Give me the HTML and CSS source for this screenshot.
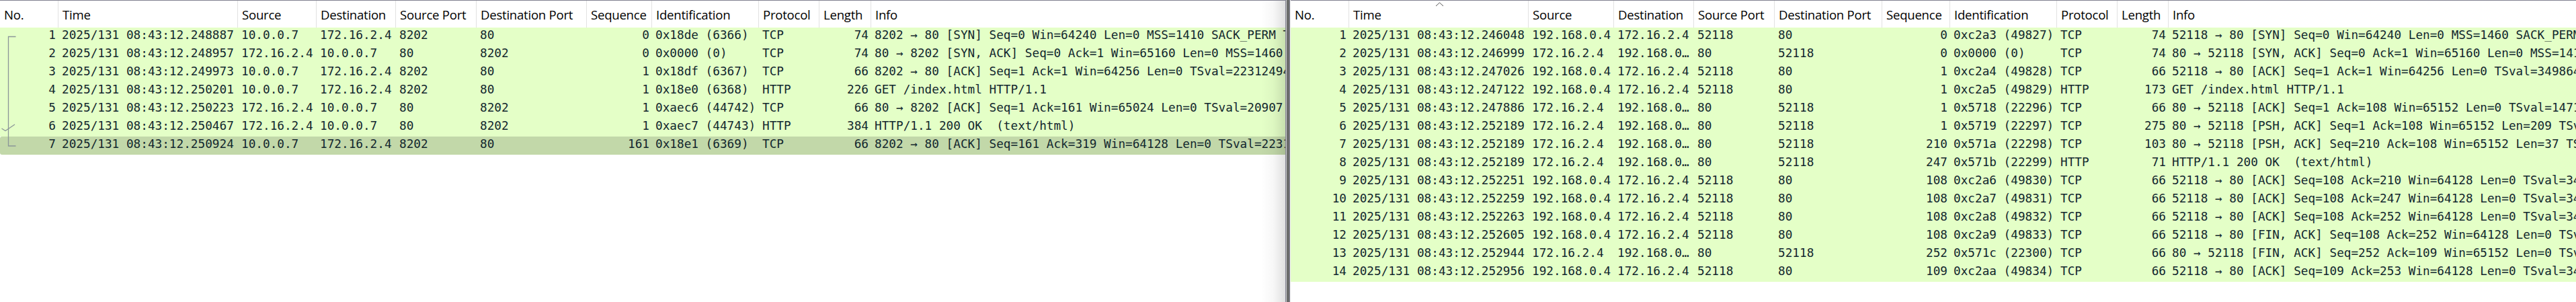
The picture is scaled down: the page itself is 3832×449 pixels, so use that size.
FILE: index.html
```
<!DOCTYPE html>
<html lang="en">
<head>
    <meta charset="UTF-8">
    <meta name="viewport" content="width=device-width, initial-scale=1.0">
    <title>Packet list</title>
    <link rel="stylesheet" href="styles.css">
</head>
<body>

<div class="screen">
    <div class="pane pane-left">
        <div class="row head">
            <span>No.</span><span>Time</span><span>Source</span><span>Destination</span><span>Source Port</span><span>Destination Port</span><span>Sequence</span><span>Identification</span><span>Protocol</span><span>Length</span><span>Info</span>
        </div>
        <div class="packets" id="left"></div>
        <svg class="related" width="28" height="190" viewBox="0 0 28 190" fill="none" stroke="#8b9698" stroke-width="1.3">
            <path d="M23.5 13.5H12.5V176H23.5"/>
            <path d="M2.5 150L8 153.5L22 144"/>
        </svg>
        <div class="shade"></div>
    </div>
    <div class="divider"></div>
    <div class="pane pane-right">
        <div class="row head">
            <span>No.</span><span class="sorted">Time<svg class="sort" width="13" height="7" viewBox="0 0 13 7" fill="none" stroke="#555"><path d="M1 6L6.5 1L12 6"/></svg></span><span>Source</span><span>Destination</span><span>Source Port</span><span>Destination Port</span><span>Sequence</span><span>Identification</span><span>Protocol</span><span>Length</span><span>Info</span>
        </div>
        <div class="packets" id="right"></div>
    </div>
</div>

<script src="script.js"></script>
</body>
</html>
```
FILE: styles.css
```
body {
    margin: 0;
    background-color: #fff;
    font-family: "DejaVu Sans Mono", monospace;
    font-size: 17.72px;
    color: #12272e;
}
.screen {
    display: flex;
    height: 449px;
    overflow: hidden;
}
.pane {
    position: relative;
    box-sizing: border-box;
    border-top: 1px solid #80808f;
    overflow: hidden;
}
.pane-left {
    width: 1912px;
    --cols: 87px 267px 117px 118px 120px 164px 97px 159px 90px 77px 1fr;
}
.pane-right {
    width: 1912px;
    --cols: 87px 267px 127px 119px 120px 160px 101px 159px 90px 76px 1fr;
}
/* window edge between the two captures */
.divider {
    width: 8px;
    background: linear-gradient(to right, #80808f 1px, #cfd0d2 1px, #cfd0d2 2px, #6b6c6b 2px, #6b6c6b 6px, #80808f 6px, #80808f 7px, #f0f0f0 7px);
}
.row {
    display: grid;
    grid-template-columns: var(--cols);
    height: 27px;
    line-height: 22px;
    background-color: #e4ffc7;
}
.row span {
    padding: 0 4px 0 5px;
    white-space: pre;
    overflow: hidden;
}
.packets span:nth-child(1),
.packets span:nth-child(7),
.packets span:nth-child(10) {
    text-align: right;
}
.packets .selected {
    background-color: #c2d8a9;
    border-radius: 3px 0 0 3px;
}
.head {
    height: 40px;
    line-height: 42px;
    background-color: #fff;
    font-family: "Open Sans", sans-serif;
    font-size: 18.6px;
    letter-spacing: -0.25px;
    color: #000;
}
.head span {
    padding: 0 0 0 6px;
    border-right: 1px solid #e2e2e2;
}
.head span:last-child {
    border-right: 0;
}
.head .sorted {
    position: relative;
}
.sort {
    position: absolute;
    left: 128px;
    top: 2px;
}
.related {
    position: absolute;
    left: 0;
    top: 40px;
}
.shade {
    position: absolute;
    top: 0;
    right: 0;
    bottom: 0;
    width: 36px;
    background: linear-gradient(to right, rgba(0, 0, 0, 0), rgba(0, 0, 0, 0.03) 50%, rgba(0, 0, 0, 0.12));
}
```
FILE: script.js
```
const left = [
    ["1", "2025/131 08:43:12.248887", "10.0.0.7", "172.16.2.4", "8202", "80", "0", "0x18de (6366)", "TCP", "74", "8202 → 80 [SYN] Seq=0 Win=64240 Len=0 MSS=1410 SACK_PERM T"],
    ["2", "2025/131 08:43:12.248957", "172.16.2.4", "10.0.0.7", "80", "8202", "0", "0x0000 (0)", "TCP", "74", "80 → 8202 [SYN, ACK] Seq=0 Ack=1 Win=65160 Len=0 MSS=1460"],
    ["3", "2025/131 08:43:12.249973", "10.0.0.7", "172.16.2.4", "8202", "80", "1", "0x18df (6367)", "TCP", "66", "8202 → 80 [ACK] Seq=1 Ack=1 Win=64256 Len=0 TSval=22312494"],
    ["4", "2025/131 08:43:12.250201", "10.0.0.7", "172.16.2.4", "8202", "80", "1", "0x18e0 (6368)", "HTTP", "226", "GET /index.html HTTP/1.1"],
    ["5", "2025/131 08:43:12.250223", "172.16.2.4", "10.0.0.7", "80", "8202", "1", "0xaec6 (44742)", "TCP", "66", "80 → 8202 [ACK] Seq=1 Ack=161 Win=65024 Len=0 TSval=20907"],
    ["6", "2025/131 08:43:12.250467", "172.16.2.4", "10.0.0.7", "80", "8202", "1", "0xaec7 (44743)", "HTTP", "384", "HTTP/1.1 200 OK  (text/html)"],
    ["7", "2025/131 08:43:12.250924", "10.0.0.7", "172.16.2.4", "8202", "80", "161", "0x18e1 (6369)", "TCP", "66", "8202 → 80 [ACK] Seq=161 Ack=319 Win=64128 Len=0 TSval=2231"]
];

const right = [
    ["1", "2025/131 08:43:12.246048", "192.168.0.4", "172.16.2.4", "52118", "80", "0", "0xc2a3 (49827)", "TCP", "74", "52118 → 80 [SYN] Seq=0 Win=64240 Len=0 MSS=1460 SACK_PERM"],
    ["2", "2025/131 08:43:12.246999", "172.16.2.4", "192.168.0…", "80", "52118", "0", "0x0000 (0)", "TCP", "74", "80 → 52118 [SYN, ACK] Seq=0 Ack=1 Win=65160 Len=0 MSS=1410"],
    ["3", "2025/131 08:43:12.247026", "192.168.0.4", "172.16.2.4", "52118", "80", "1", "0xc2a4 (49828)", "TCP", "66", "52118 → 80 [ACK] Seq=1 Ack=1 Win=64256 Len=0 TSval=349864"],
    ["4", "2025/131 08:43:12.247122", "192.168.0.4", "172.16.2.4", "52118", "80", "1", "0xc2a5 (49829)", "HTTP", "173", "GET /index.html HTTP/1.1"],
    ["5", "2025/131 08:43:12.247886", "172.16.2.4", "192.168.0…", "80", "52118", "1", "0x5718 (22296)", "TCP", "66", "80 → 52118 [ACK] Seq=1 Ack=108 Win=65152 Len=0 TSval=1471"],
    ["6", "2025/131 08:43:12.252189", "172.16.2.4", "192.168.0…", "80", "52118", "1", "0x5719 (22297)", "TCP", "275", "80 → 52118 [PSH, ACK] Seq=1 Ack=108 Win=65152 Len=209 TSv"],
    ["7", "2025/131 08:43:12.252189", "172.16.2.4", "192.168.0…", "80", "52118", "210", "0x571a (22298)", "TCP", "103", "80 → 52118 [PSH, ACK] Seq=210 Ack=108 Win=65152 Len=37 TS"],
    ["8", "2025/131 08:43:12.252189", "172.16.2.4", "192.168.0…", "80", "52118", "247", "0x571b (22299)", "HTTP", "71", "HTTP/1.1 200 OK  (text/html)"],
    ["9", "2025/131 08:43:12.252251", "192.168.0.4", "172.16.2.4", "52118", "80", "108", "0xc2a6 (49830)", "TCP", "66", "52118 → 80 [ACK] Seq=108 Ack=210 Win=64128 Len=0 TSval=34"],
    ["10", "2025/131 08:43:12.252259", "192.168.0.4", "172.16.2.4", "52118", "80", "108", "0xc2a7 (49831)", "TCP", "66", "52118 → 80 [ACK] Seq=108 Ack=247 Win=64128 Len=0 TSval=34"],
    ["11", "2025/131 08:43:12.252263", "192.168.0.4", "172.16.2.4", "52118", "80", "108", "0xc2a8 (49832)", "TCP", "66", "52118 → 80 [ACK] Seq=108 Ack=252 Win=64128 Len=0 TSval=34"],
    ["12", "2025/131 08:43:12.252605", "192.168.0.4", "172.16.2.4", "52118", "80", "108", "0xc2a9 (49833)", "TCP", "66", "52118 → 80 [FIN, ACK] Seq=108 Ack=252 Win=64128 Len=0 TSv"],
    ["13", "2025/131 08:43:12.252944", "172.16.2.4", "192.168.0…", "80", "52118", "252", "0x571c (22300)", "TCP", "66", "80 → 52118 [FIN, ACK] Seq=252 Ack=109 Win=65152 Len=0 TSv"],
    ["14", "2025/131 08:43:12.252956", "192.168.0.4", "172.16.2.4", "52118", "80", "109", "0xc2aa (49834)", "TCP", "66", "52118 → 80 [ACK] Seq=109 Ack=253 Win=64128 Len=0 TSval=34"]
];

function fillPane(id, packets, selected) {
    const list = document.getElementById(id);
    packets.forEach((packet, i) => {
        const row = document.createElement("div");
        row.className = i === selected ? "row selected" : "row";
        packet.forEach(text => {
            const cell = document.createElement("span");
            cell.textContent = text;
            row.appendChild(cell);
        });
        list.appendChild(row);
    });
}

fillPane("left", left, 6);
fillPane("right", right, -1);
```
